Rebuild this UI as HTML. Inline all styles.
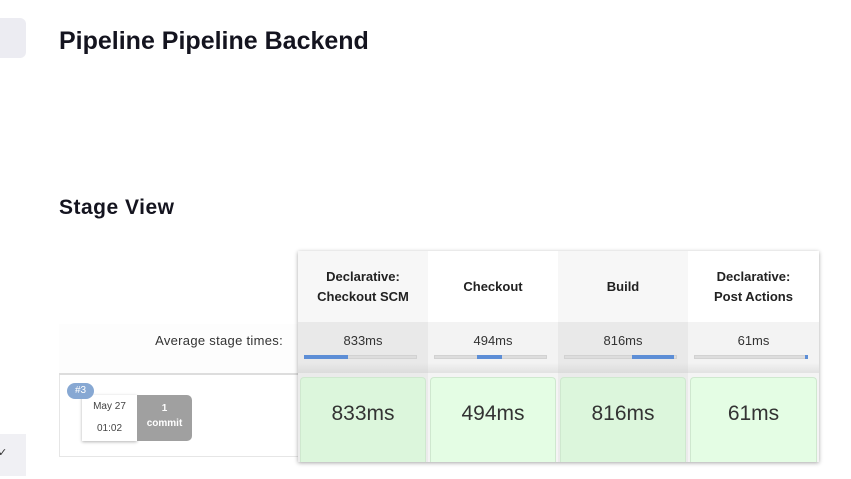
<!DOCTYPE html>
<html><head><style>
body{margin:0;width:851px;height:479px;background:#fff;font-family:"Liberation Sans",sans-serif;position:relative;overflow:hidden;color:#14141f}
.a{position:absolute}
h1{position:absolute;left:59px;top:27px;margin:0;font-size:25px;font-weight:bold;letter-spacing:0}
h2{position:absolute;left:59px;top:196px;margin:0;font-size:21px;font-weight:bold;letter-spacing:0.5px}
.tbl{position:absolute;left:298px;top:251px;width:521px;height:211px;box-shadow:0 1px 4px rgba(0,0,0,.35);background:#fff}
.col{position:absolute;top:0;width:130px;height:211px}
.hd{height:71px;display:flex;align-items:center;justify-content:center;text-align:center;font-size:13px;font-weight:bold;line-height:20px;color:#222}
.av{height:51px;position:relative;font-size:13px;color:#333;text-align:center}
.av span{position:absolute;top:11px;left:0;right:0}
.bar{position:absolute;left:6px;right:11px;top:33px;height:4px;background:#ddd;border:1px solid #d2d2d2;box-sizing:border-box}
.bar i{position:absolute;top:-1px;height:4px;background:#5d8ed6}
.cell{position:absolute;left:2px;right:2px;top:126px;height:85px;border:1px solid #cfe8cf;border-radius:4px 4px 0 0;border-bottom:none;font-size:21px;color:#333;display:flex;align-items:center;justify-content:center;box-sizing:border-box;padding-bottom:12px}
</style></head><body>
<div class="a" style="left:0;top:18px;width:26px;height:40px;background:#ececf2;border-radius:0 6px 6px 0"></div>
<div class="a" style="left:0;top:434px;width:26px;height:42px;background:#f0f0f4"></div>
<div class="a" style="left:-2px;top:446px;font-size:11px;color:#333">✓</div>
<h1>Pipeline Pipeline Backend</h1>
<h2>Stage View</h2>
<div class="a" style="left:59px;top:324px;width:239px;height:49px;background:#fdfdfd;border-bottom:2px solid #ddd"></div>
<div class="a" style="left:100px;width:183px;text-align:right;top:333px;font-size:13px;color:#333;letter-spacing:0.3px">Average stage times:</div>
<div class="a" style="left:59px;top:375px;width:238px;height:81px;border:1px solid #e6e6e6;border-top:none"></div>
<div class="a" style="left:82px;top:395px;width:55px;height:46px;background:#fff;box-shadow:0 1px 3px rgba(0,0,0,.3);font-size:10px;color:#444;text-align:center;line-height:22px;padding-top:1px;box-sizing:border-box">May 27<br>01:02</div>
<div class="a" style="left:137px;top:395px;width:55px;height:46px;background:#a0a0a0;border-radius:0 5px 5px 0;color:#fff;font-size:10px;font-weight:bold;text-align:center;line-height:15px;padding-top:6px;box-sizing:border-box">1<br>commit</div>
<div class="a" style="left:67px;top:383px;width:27px;height:16px;background:#87a8d3;border-radius:8px;color:#fff;font-size:10px;text-align:center;line-height:16px">#3</div>
<div class="tbl">
 <div class="col" style="left:0;background:#ebebeb">
  <div class="hd" style="background:#f7f7f7">Declarative:<br>Checkout SCM</div>
  <div class="av" style="background:linear-gradient(#e9e9e9 80%,#dcdcdc)"><span>833ms</span><div class="bar"><i style="left:-1px;width:44px"></i></div></div>
  <div class="cell" style="background:#dcf6dc">833ms</div>
 </div>
 <div class="col" style="left:130px;background:#f4f4f4">
  <div class="hd" style="background:#fff">Checkout</div>
  <div class="av" style="background:linear-gradient(#f3f3f3 80%,#e2e2e2)"><span>494ms</span><div class="bar"><i style="left:42px;width:25px"></i></div></div>
  <div class="cell" style="background:#e4fde4">494ms</div>
 </div>
 <div class="col" style="left:260px;background:#ebebeb">
  <div class="hd" style="background:#f7f7f7">Build</div>
  <div class="av" style="background:linear-gradient(#e9e9e9 80%,#dcdcdc)"><span>816ms</span><div class="bar"><i style="left:67px;width:42px"></i></div></div>
  <div class="cell" style="background:#dcf6dc">816ms</div>
 </div>
 <div class="col" style="left:390px;width:131px;background:#f4f4f4">
  <div class="hd" style="background:#fff">Declarative:<br>Post Actions</div>
  <div class="av" style="background:linear-gradient(#f3f3f3 80%,#e2e2e2)"><span>61ms</span><div class="bar"><i style="left:110px;width:3px"></i></div></div>
  <div class="cell" style="background:#e4fde4">61ms</div>
 </div>
</div>
</body></html>
